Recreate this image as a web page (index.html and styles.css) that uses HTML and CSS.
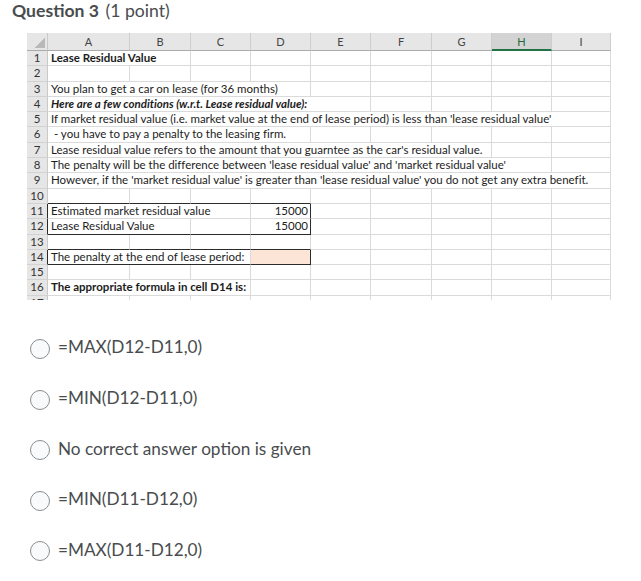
FILE: index.html
```
<!DOCTYPE html>
<html lang="en">
<head>
<meta charset="utf-8">
<title>Question 3</title>
<link rel="stylesheet" href="styles.css">
</head>
<body>
<h1 class="q-title"><span class="q-num">Question 3</span> <span class="q-pts">(1 point)</span></h1>

<div class="sheet-wrap">
  <div class="sheet">
    <div class="corner"><span class="tri"></span></div>
    <div class="colh">A</div><div class="colh">B</div><div class="colh">C</div><div class="colh">D</div><div class="colh">E</div><div class="colh">F</div><div class="colh">G</div><div class="colh sel">H</div><div class="colh">I</div>

    <div class="rowh">1</div><div class="c s2 b">Lease Residual Value</div><div class="c"></div><div class="c"></div><div class="c"></div><div class="c"></div><div class="c"></div><div class="c"></div><div class="c"></div>
    <div class="rowh">2</div><div class="c"></div><div class="c"></div><div class="c"></div><div class="c"></div><div class="c"></div><div class="c"></div><div class="c"></div><div class="c"></div><div class="c"></div>
    <div class="rowh">3</div><div class="c s4">You plan to get a car on lease (for 36 months)</div><div class="c"></div><div class="c"></div><div class="c"></div><div class="c"></div><div class="c"></div>
    <div class="rowh">4</div><div class="c s5 bi">Here are a few conditions (w.r.t. Lease residual value):</div><div class="c"></div><div class="c"></div><div class="c"></div><div class="c"></div>
    <div class="rowh">5</div><div class="c s9">If market residual value (i.e. market value at the end of lease period) is less than 'lease residual value'</div>
    <div class="rowh">6</div><div class="c s4">&nbsp;- you have to pay a penalty to the leasing firm.</div><div class="c"></div><div class="c"></div><div class="c"></div><div class="c"></div><div class="c"></div>
    <div class="rowh">7</div><div class="c s7">Lease residual value refers to the amount that you guarntee as the car's residual value.</div><div class="c"></div><div class="c"></div>
    <div class="rowh">8</div><div class="c s8">The penalty will be the difference between 'lease residual value' and 'market residual value'</div><div class="c"></div>
    <div class="rowh">9</div><div class="c s9">However, if the 'market residual value' is greater than 'lease residual value' you do not get any extra benefit.</div>
    <div class="rowh">10</div><div class="c db"></div><div class="c db"></div><div class="c db"></div><div class="c db"></div><div class="c"></div><div class="c"></div><div class="c"></div><div class="c"></div><div class="c"></div>
    <div class="rowh dr">11</div><div class="c s3">Estimated market residual value</div><div class="c num dr">15000</div><div class="c"></div><div class="c"></div><div class="c"></div><div class="c"></div><div class="c"></div>
    <div class="rowh dr">12</div><div class="c s2 db">Lease Residual Value</div><div class="c db"></div><div class="c num dr db">15000</div><div class="c"></div><div class="c"></div><div class="c"></div><div class="c"></div><div class="c"></div>
    <div class="rowh">13</div><div class="c db"></div><div class="c db"></div><div class="c db"></div><div class="c db"></div><div class="c"></div><div class="c"></div><div class="c"></div><div class="c"></div><div class="c"></div>
    <div class="rowh dr">14</div><div class="c s3 db">The penalty at the end of lease period:</div><div class="c fill dr db"></div><div class="c"></div><div class="c"></div><div class="c"></div><div class="c"></div><div class="c"></div>
    <div class="rowh">15</div><div class="c"></div><div class="c"></div><div class="c"></div><div class="c"></div><div class="c"></div><div class="c"></div><div class="c"></div><div class="c"></div><div class="c"></div>
    <div class="rowh">16</div><div class="c s3 b">The appropriate formula in cell D14 is:</div><div class="c"></div><div class="c"></div><div class="c"></div><div class="c"></div><div class="c"></div><div class="c"></div>
    <div class="rowh">17</div><div class="c"></div><div class="c"></div><div class="c"></div><div class="c"></div><div class="c"></div><div class="c"></div><div class="c"></div><div class="c"></div><div class="c"></div>
  </div>
</div>

<div class="answers">
  <label class="opt"><span class="radio"></span><span class="opt-text">=MAX(D12-D11,0)</span></label>
  <label class="opt"><span class="radio"></span><span class="opt-text">=MIN(D12-D11,0)</span></label>
  <label class="opt"><span class="radio"></span><span class="opt-text">No correct answer option is given</span></label>
  <label class="opt"><span class="radio"></span><span class="opt-text">=MIN(D11-D12,0)</span></label>
  <label class="opt"><span class="radio"></span><span class="opt-text">=MAX(D11-D12,0)</span></label>
</div>
</body>
</html>
```
FILE: styles.css
```
html, body {
  margin: 0;
  padding: 0;
  background: #ffffff;
}

body {
  font-family: Lato, "Noto Sans", sans-serif;
  color: #494c4e;
}

.q-title {
  margin: 0;
  padding-left: 12px;
  font-size: 17.6px;
  line-height: 21px;
  font-weight: 400;
  color: #494c4e;
}

.q-num {
  font-weight: 700;
  margin-right: 2px;
}

.q-pts {
  font-weight: 400;
}

/* ---------- spreadsheet picture ---------- */
.sheet-wrap {
  margin: 12px 0 0 27px;
  width: 584px;
  height: 267px;
  overflow: hidden;
}

.sheet {
  display: grid;
  grid-template-columns: 21px 82px 61px 60px 60px 60px 61px 60px 60px 59px;
  grid-template-rows: 18px;
  grid-auto-rows: 15.3px;
  font-family: Lato, "Liberation Sans", sans-serif;
  font-size: 11.5px;
  font-variant-ligatures: none;
  color: #1c1c1c;
}

.sheet > div {
  box-sizing: border-box;
  min-width: 0;
}

.corner {
  background: #e6e6e6;
  border-right: 1px solid #c9c9c9;
  border-bottom: 1px solid #ababab;
  display: flex;
  justify-content: flex-end;
  align-items: flex-end;
  padding: 0 2px 2px 0;
}

.tri {
  width: 11px;
  height: 10px;
  background: linear-gradient(to bottom right, transparent 50%, #b9b9b9 50%);
}

.colh {
  background: #e6e6e6;
  border-right: 1px solid #cdcdcd;
  border-bottom: 1px solid #ababab;
  color: #444444;
  text-align: center;
  line-height: 17px;
  font-size: 11px;
}

.colh.sel {
  background: #d3d3d3;
  border-bottom: 2px solid #217346;
  color: #1d6b40;
}

.rowh {
  background: #e6e6e6;
  border-right: 1px solid #c9c9c9;
  border-bottom: 1px solid #d2d2d2;
  color: #333333;
  text-align: center;
  line-height: 13.5px;
  font-size: 11.5px;
}

.c {
  border-right: 1px solid #dadada;
  border-bottom: 1px solid #dadada;
  padding: 0 2px 0 3px;
  line-height: 14.3px;
  white-space: nowrap;
  overflow: visible;
}

.s2 { grid-column: span 2; }
.s3 { grid-column: span 3; }
.s4 { grid-column: span 4; }
.s5 { grid-column: span 5; }
.s7 { grid-column: span 7; }
.s8 { grid-column: span 8; }
.s9 { grid-column: span 9; }

.b { font-weight: 700; }
.bi { font-weight: 700; font-style: italic; }

.num { text-align: right; }

.fill { background: #fce4d6; }

.sheet > .dr { border-right: 1px solid #2b2b2b; }
.sheet > .db { border-bottom: 1px solid #2b2b2b; }

/* ---------- answer options ---------- */
.answers {
  margin-top: 21.7px;
  padding-left: 30px;
}

.opt {
  display: flex;
  align-items: center;
  gap: 8px;
  height: 50.6px;
  font-size: 17.2px;
  color: #494c4e;
}

.radio {
  box-sizing: border-box;
  width: 20px;
  height: 20px;
  margin-top: 4px;
  border: 1.5px solid #8a8d90;
  border-radius: 50%;
  background: #f9fafc;
  flex: none;
}

.opt-text {
  white-space: nowrap;
}
```
